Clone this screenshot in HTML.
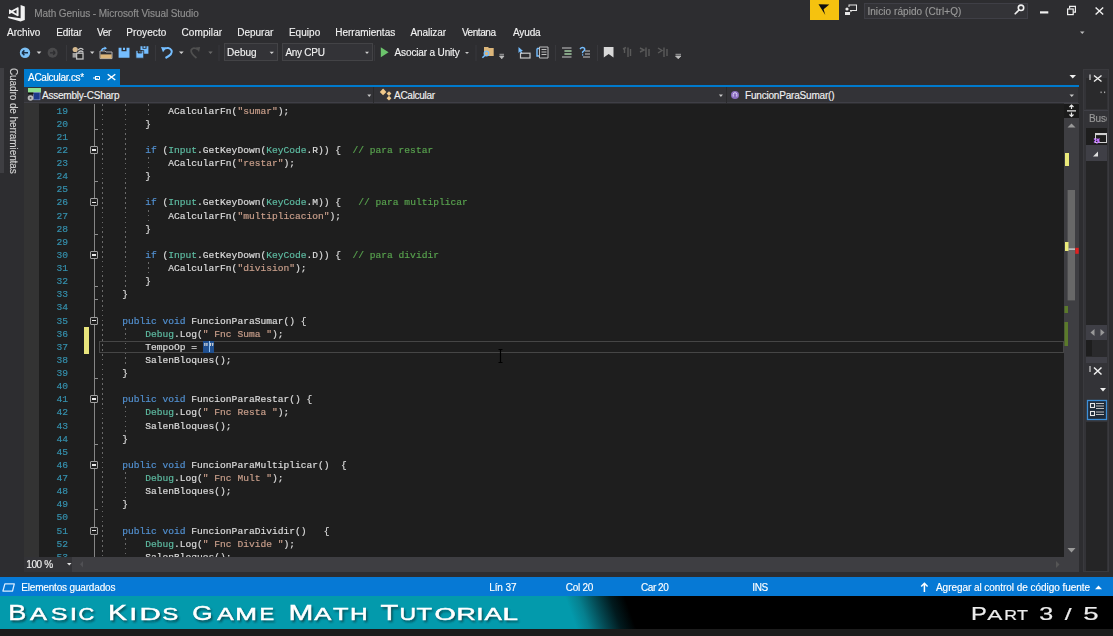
<!DOCTYPE html>
<html><head><meta charset="utf-8">
<style>
*{margin:0;padding:0;box-sizing:border-box}
html,body{width:1113px;height:636px;overflow:hidden;background:#2d2d30;font-family:"Liberation Sans",sans-serif;font-size:10px;color:#f1f1f1}
.a{position:absolute}
.t{position:absolute;white-space:pre;line-height:12px;-webkit-text-stroke:0.15px currentColor}
.w{color:#fff}
#code{position:absolute;left:39px;top:104px;width:1025px;height:453px;background:#1e1e1e;overflow:hidden}
.ln{position:absolute;left:0;width:29px;text-align:right;color:#3590ad}
.cl{position:absolute;left:60.2px;white-space:pre;color:#dcdcdc}
#code .ln,#code .cl{font-family:"Liberation Mono",monospace;font-size:9.6px;line-height:13.125px;height:13.125px;-webkit-text-stroke:0.18px currentColor}
.k{color:#5290d0}.ty{color:#5ebca2}.s{color:#c89e8a}.c{color:#58a24e}
.box{position:absolute;left:51px;width:8px;height:8px;border:1.2px solid #a0a0a0;border-radius:1px;background:#1e1e1e}
.box:after{content:"";position:absolute;left:1px;top:2.2px;width:4px;height:1.6px;background:#e8e8e8}
.g{position:absolute;width:1.2px;background:repeating-linear-gradient(180deg,#6a6a6a 0,#6a6a6a 1.6px,transparent 1.6px,transparent 4.9px)}
</style></head><body><div id="root" style="position:absolute;left:0;top:0;width:1113px;height:636px;filter:blur(0.4px)">
<!-- title bar -->
<div class="t" style="left:34.2px;top:8.4px;color:#8f8f8f;letter-spacing:-0.07px">Math Genius - Microsoft Visual Studio</div>
<div class="a" style="left:810px;top:0;width:29px;height:20px;background:#f5c20f"></div>
<div class="a" style="left:864px;top:3px;width:164px;height:16px;background:#333337;border:1px solid #3f3f46"></div>
<div class="t" style="left:867.4px;top:5.9px;color:#999999;letter-spacing:0.07px">Inicio rápido (Ctrl+Q)</div>
<!-- menu -->
<div class="t" style="left:7px;top:27.1px">Archivo</div>
<div class="t" style="left:56.2px;top:27.1px;letter-spacing:-0.03px">Editar</div>
<div class="t" style="left:97px;top:27.1px;letter-spacing:-0.4px">Ver</div>
<div class="t" style="left:126.2px;top:27.1px;letter-spacing:0.1px">Proyecto</div>
<div class="t" style="left:181.5px;top:27.1px;letter-spacing:0.09px">Compilar</div>
<div class="t" style="left:237.2px;top:27.1px">Depurar</div>
<div class="t" style="left:288.9px;top:27.1px;letter-spacing:0.05px">Equipo</div>
<div class="t" style="left:335.2px;top:27.1px">Herramientas</div>
<div class="t" style="left:410.5px;top:27.1px;letter-spacing:-0.09px">Analizar</div>
<div class="t" style="left:461.9px;top:27.1px;letter-spacing:-0.44px">Ventana</div>
<div class="t" style="left:513px;top:27.1px;letter-spacing:-0.14px">Ayuda</div>
<!-- toolbar combos -->
<div class="a" style="left:224px;top:43px;width:54px;height:18px;background:#333337;border:1px solid #434346"></div>
<div class="t" style="left:227.1px;top:47.3px">Debug</div>
<div class="a" style="left:282px;top:43px;width:91px;height:18px;background:#333337;border:1px solid #434346"></div>
<div class="t" style="left:285.4px;top:47.3px;letter-spacing:-0.27px">Any CPU</div>
<div class="t" style="left:394.6px;top:47.3px;letter-spacing:-0.15px">Asociar a Unity</div>
<!-- left strip -->
<div class="a" style="left:0;top:68px;width:4px;height:105px;background:#3e3e42"></div>
<div class="t" style="left:7px;top:68px;width:104px;transform-origin:0 0;transform:translate(12px,0) rotate(90deg);color:#d0d0d0;letter-spacing:-0.1px">Cuadro de herramientas</div>
<!-- tab -->
<div class="a" style="left:24px;top:69px;width:96px;height:17px;background:#007acc"></div>
<div class="t w" style="left:28px;top:72px;letter-spacing:-0.27px">ACalcular.cs*</div>
<div class="a" style="left:24px;top:85px;width:1055px;height:2px;background:#007acc"></div>
<!-- nav bar -->
<div class="a" style="left:24px;top:87px;width:1054px;height:16px;background:#333337;border-bottom:1px solid #3f3f46"></div>
<div class="a" style="left:373px;top:87px;width:1px;height:16px;background:#2a2a2c"></div>
<div class="a" style="left:726px;top:87px;width:1px;height:16px;background:#2a2a2c"></div>
<div class="t" style="left:42px;top:89.5px;letter-spacing:-0.22px">Assembly-CSharp</div>
<div class="t" style="left:394px;top:89.5px;letter-spacing:-0.27px">ACalcular</div>
<div class="t" style="left:745px;top:89.5px;letter-spacing:-0.19px">FuncionParaSumar()</div>
<!-- editor -->
<div class="a" style="left:24px;top:103px;width:15px;height:454px;background:#333333"></div>
<div id="code">
<div class="a" style="left:54.8px;top:0;width:1.4px;height:453px;background:#858585"></div>
<div class="box" style="top:41.88px"></div>
<div class="box" style="top:94.38px"></div>
<div class="box" style="top:146.88px"></div>
<div class="box" style="top:212.50px"></div>
<div class="box" style="top:291.25px"></div>
<div class="box" style="top:356.88px"></div>
<div class="box" style="top:422.50px"></div>
<div class="a" style="left:56px;top:24.62px;width:3px;height:1px;background:#8c8c8c"></div>
<div class="a" style="left:56px;top:77.12px;width:3px;height:1px;background:#8c8c8c"></div>
<div class="a" style="left:56px;top:129.62px;width:3px;height:1px;background:#8c8c8c"></div>
<div class="a" style="left:56px;top:182.12px;width:3px;height:1px;background:#8c8c8c"></div>
<div class="a" style="left:56px;top:195.25px;width:3px;height:1px;background:#8c8c8c"></div>
<div class="a" style="left:56px;top:274.00px;width:3px;height:1px;background:#8c8c8c"></div>
<div class="a" style="left:56px;top:339.62px;width:3px;height:1px;background:#8c8c8c"></div>
<div class="a" style="left:56px;top:405.25px;width:3px;height:1px;background:#8c8c8c"></div>
<div class="g" style="left:62.80px;top:0.00px;height:459.88px"></div>
<div class="g" style="left:85.84px;top:0.00px;height:184.25px"></div>
<div class="g" style="left:108.88px;top:0.00px;height:13.62px"></div>
<div class="g" style="left:108.88px;top:53.00px;height:13.12px"></div>
<div class="g" style="left:108.88px;top:105.50px;height:13.12px"></div>
<div class="g" style="left:108.88px;top:158.00px;height:13.12px"></div>
<div class="g" style="left:85.84px;top:223.62px;height:39.38px"></div>
<div class="g" style="left:85.84px;top:302.38px;height:26.25px"></div>
<div class="g" style="left:85.84px;top:368.00px;height:26.25px"></div>
<div class="g" style="left:85.84px;top:433.62px;height:26.25px"></div>
<div class="a" style="left:59.7px;top:237px;width:965px;height:12px;border:1px solid #464646"></div>
<div class="a" style="left:163.6px;top:236.5px;width:11px;height:12.5px;background:#1f4f8f"></div>
<div class="cl" style="top:236.750px;left:163.88px;color:#dcdcdc">""</div>
<div class="a" style="left:169.5px;top:237px;width:1.2px;height:11px;background:#8fc0f0"></div>
<div class="a" style="left:45px;top:223px;width:5px;height:26.5px;background:#e8e47c"></div>
<div class="ln" style="top:0.5px">19</div>
<div class="cl" style="top:0.5px">            ACalcularFn(<span class="s">"sumar"</span>);</div>
<div class="ln" style="top:13.625px">20</div>
<div class="cl" style="top:13.625px">        }</div>
<div class="ln" style="top:26.75px">21</div>
<div class="ln" style="top:39.875px">22</div>
<div class="cl" style="top:39.875px">        <span class="k">if</span> (<span class="ty">Input</span>.GetKeyDown(<span class="ty">KeyCode</span>.R)) {  <span class="c">// para restar</span></div>
<div class="ln" style="top:53.0px">23</div>
<div class="cl" style="top:53.0px">            ACalcularFn(<span class="s">"restar"</span>);</div>
<div class="ln" style="top:66.125px">24</div>
<div class="cl" style="top:66.125px">        }</div>
<div class="ln" style="top:79.25px">25</div>
<div class="ln" style="top:92.375px">26</div>
<div class="cl" style="top:92.375px">        <span class="k">if</span> (<span class="ty">Input</span>.GetKeyDown(<span class="ty">KeyCode</span>.M)) {   <span class="c">// para multiplicar</span></div>
<div class="ln" style="top:105.5px">27</div>
<div class="cl" style="top:105.5px">            ACalcularFn(<span class="s">"multiplicacion"</span>);</div>
<div class="ln" style="top:118.625px">28</div>
<div class="cl" style="top:118.625px">        }</div>
<div class="ln" style="top:131.75px">29</div>
<div class="ln" style="top:144.875px">30</div>
<div class="cl" style="top:144.875px">        <span class="k">if</span> (<span class="ty">Input</span>.GetKeyDown(<span class="ty">KeyCode</span>.D)) {  <span class="c">// para dividir</span></div>
<div class="ln" style="top:158.0px">31</div>
<div class="cl" style="top:158.0px">            ACalcularFn(<span class="s">"division"</span>);</div>
<div class="ln" style="top:171.125px">32</div>
<div class="cl" style="top:171.125px">        }</div>
<div class="ln" style="top:184.25px">33</div>
<div class="cl" style="top:184.25px">    }</div>
<div class="ln" style="top:197.375px">34</div>
<div class="ln" style="top:210.5px">35</div>
<div class="cl" style="top:210.5px">    <span class="k">public</span> <span class="k">void</span> FuncionParaSumar() {</div>
<div class="ln" style="top:223.625px">36</div>
<div class="cl" style="top:223.625px">        <span class="ty">Debug</span>.Log(<span class="s">" Fnc Suma "</span>);</div>
<div class="ln" style="top:236.75px">37</div>
<div class="cl" style="top:236.75px">        TempoOp = </div>
<div class="ln" style="top:249.875px">38</div>
<div class="cl" style="top:249.875px">        SalenBloques();</div>
<div class="ln" style="top:263.0px">39</div>
<div class="cl" style="top:263.0px">    }</div>
<div class="ln" style="top:276.125px">40</div>
<div class="ln" style="top:289.25px">41</div>
<div class="cl" style="top:289.25px">    <span class="k">public</span> <span class="k">void</span> FuncionParaRestar() {</div>
<div class="ln" style="top:302.375px">42</div>
<div class="cl" style="top:302.375px">        <span class="ty">Debug</span>.Log(<span class="s">" Fnc Resta "</span>);</div>
<div class="ln" style="top:315.5px">43</div>
<div class="cl" style="top:315.5px">        SalenBloques();</div>
<div class="ln" style="top:328.625px">44</div>
<div class="cl" style="top:328.625px">    }</div>
<div class="ln" style="top:341.75px">45</div>
<div class="ln" style="top:354.875px">46</div>
<div class="cl" style="top:354.875px">    <span class="k">public</span> <span class="k">void</span> FuncionParaMultiplicar()  {</div>
<div class="ln" style="top:368.0px">47</div>
<div class="cl" style="top:368.0px">        <span class="ty">Debug</span>.Log(<span class="s">" Fnc Mult "</span>);</div>
<div class="ln" style="top:381.125px">48</div>
<div class="cl" style="top:381.125px">        SalenBloques();</div>
<div class="ln" style="top:394.25px">49</div>
<div class="cl" style="top:394.25px">    }</div>
<div class="ln" style="top:407.375px">50</div>
<div class="ln" style="top:420.5px">51</div>
<div class="cl" style="top:420.5px">    <span class="k">public</span> <span class="k">void</span> FuncionParaDividir()   {</div>
<div class="ln" style="top:433.625px">52</div>
<div class="cl" style="top:433.625px">        <span class="ty">Debug</span>.Log(<span class="s">" Fnc Divide "</span>);</div>
<div class="ln" style="top:446.75px">53</div>
<div class="cl" style="top:446.75px">        SalenBloques();</div>
</div>
<div class="a" style="left:1064px;top:103px;width:15px;height:468px;background:#3e3e42"></div>
<div class="a" style="left:24px;top:557px;width:48px;height:15px;background:#333337"></div>
<div class="a" style="left:72px;top:557px;width:1007px;height:15px;background:#3e3e42"></div>
<div class="t" style="left:26.2px;top:559px;letter-spacing:-0.35px">100 %</div>
<!-- right panel -->
<div class="a" style="left:1083px;top:69px;width:26px;height:503px;background:#333337;border:1px solid #3a3a3e"></div>
<div class="a" style="left:1085.5px;top:78px;width:21px;height:31px;background:#2a2a2c"></div>
<div class="a" style="left:1084px;top:110px;width:24px;height:1px;background:#3f3f46"></div>
<div class="t" style="left:1089px;top:113px;color:#999;letter-spacing:-0.1px;width:18px;overflow:hidden">Busc</div>
<div class="a" style="left:1085.5px;top:128px;width:21px;height:17px;background:#1e1e1e"></div>
<div class="a" style="left:1085.5px;top:145px;width:21px;height:16px;background:#3f3f46"></div>
<div class="a" style="left:1085.5px;top:161px;width:21px;height:164px;background:#252526"></div>
<div class="a" style="left:1085.5px;top:325px;width:21px;height:15px;background:#3f3f46"></div>
<div class="a" style="left:1085.5px;top:340px;width:21px;height:17px;background:#2a2a2c"></div>
<div class="a" style="left:1085.5px;top:340px;width:6px;height:16px;background:#1e1e1e"></div>
<div class="a" style="left:1085.5px;top:357px;width:21px;height:6px;background:#3f3f46"></div>
<div class="a" style="left:1085.5px;top:422px;width:21px;height:149px;background:#252526"></div>
<!-- status -->
<div class="a" style="left:0;top:577px;width:1113px;height:19px;background:#0679d5"></div>
<div class="t w" style="left:21.2px;top:582px;letter-spacing:-0.17px">Elementos guardados</div>
<div class="t w" style="left:489.2px;top:582px;letter-spacing:-0.1px">Lín 37</div>
<div class="t w" style="left:565.8px;top:582px;letter-spacing:-0.27px">Col 20</div>
<div class="t w" style="left:641.1px;top:582px;letter-spacing:-0.47px">Car 20</div>
<div class="t w" style="left:752.3px;top:582px;letter-spacing:-0.45px">INS</div>
<div class="t w" style="left:936px;top:582px;letter-spacing:-0.05px">Agregar al control de código fuente</div>
<!-- banner -->
<div class="a" style="left:0;top:596px;width:1113px;height:33px;background:linear-gradient(70deg,#039aac 0,#039aac 542px,#06808f 554px,#044b55 569px,#011a1e 584px,#000 598px,#000 100%)"></div>
<div class="a" style="left:0;top:629px;width:1113px;height:7px;background:#1c1c1c"></div>
<svg class="a" style="left:0;top:0" width="1113" height="636" viewBox="0 0 1113 636">
<g font-family="Liberation Sans" fill="#0d2e33" opacity="0.85" transform="translate(1.5,2)" filter="url(#bl)">
<text transform="translate(8.23,620.3) scale(1.276,1)" font-size="21.22">B</text>
<text transform="translate(29.90,620.3) scale(1.538,1)" font-size="16.57">A</text>
<text transform="translate(50.80,620.3) scale(1.524,1)" font-size="16.43">S</text>
<text transform="translate(69.86,620.3) scale(1.600,1)" font-size="16.57">I</text>
<text transform="translate(78.44,620.3) scale(1.327,1)" font-size="16.43">C</text>
<text transform="translate(108.02,620.3) scale(1.341,1)" font-size="21.22">K</text>
<text transform="translate(129.61,620.3) scale(1.600,1)" font-size="16.57">I</text>
<text transform="translate(139.43,620.3) scale(1.784,1)" font-size="16.57">D</text>
<text transform="translate(162.15,620.3) scale(1.461,1)" font-size="16.43">S</text>
<text transform="translate(192.24,620.3) scale(1.244,1)" font-size="21.04">G</text>
<text transform="translate(217.30,620.3) scale(1.484,1)" font-size="16.57">A</text>
<text transform="translate(235.31,620.3) scale(1.579,1)" font-size="16.57">M</text>
<text transform="translate(259.55,620.3) scale(1.325,1)" font-size="16.57">E</text>
<text transform="translate(288.50,620.3) scale(1.409,1)" font-size="21.22">M</text>
<text transform="translate(314.30,620.3) scale(1.547,1)" font-size="16.57">A</text>
<text transform="translate(333.09,620.3) scale(1.535,1)" font-size="16.57">T</text>
<text transform="translate(349.94,620.3) scale(1.479,1)" font-size="16.57">H</text>
<text transform="translate(380.51,620.3) scale(1.374,1)" font-size="21.22">T</text>
<text transform="translate(399.49,620.3) scale(1.401,1)" font-size="16.33">U</text>
<text transform="translate(416.49,620.3) scale(1.535,1)" font-size="16.57">T</text>
<text transform="translate(434.46,620.3) scale(1.666,1)" font-size="16.43">O</text>
<text transform="translate(456.55,620.3) scale(1.618,1)" font-size="16.57">R</text>
<text transform="translate(476.26,620.3) scale(1.600,1)" font-size="16.57">I</text>
<text transform="translate(484.60,620.3) scale(1.575,1)" font-size="16.57">A</text>
<text transform="translate(502.46,620.3) scale(1.683,1)" font-size="16.57">L</text>
</g>
<filter id="bl"><feGaussianBlur stdDeviation="0.9"/></filter>
<g font-family="Liberation Sans" fill="#ffffff" stroke="#ffffff" stroke-width="0.45">
<text transform="translate(8.23,620.3) scale(1.276,1)" font-size="21.22">B</text>
<text transform="translate(29.90,620.3) scale(1.538,1)" font-size="16.57">A</text>
<text transform="translate(50.80,620.3) scale(1.524,1)" font-size="16.43">S</text>
<text transform="translate(69.86,620.3) scale(1.600,1)" font-size="16.57">I</text>
<text transform="translate(78.44,620.3) scale(1.327,1)" font-size="16.43">C</text>
<text transform="translate(108.02,620.3) scale(1.341,1)" font-size="21.22">K</text>
<text transform="translate(129.61,620.3) scale(1.600,1)" font-size="16.57">I</text>
<text transform="translate(139.43,620.3) scale(1.784,1)" font-size="16.57">D</text>
<text transform="translate(162.15,620.3) scale(1.461,1)" font-size="16.43">S</text>
<text transform="translate(192.24,620.3) scale(1.244,1)" font-size="21.04">G</text>
<text transform="translate(217.30,620.3) scale(1.484,1)" font-size="16.57">A</text>
<text transform="translate(235.31,620.3) scale(1.579,1)" font-size="16.57">M</text>
<text transform="translate(259.55,620.3) scale(1.325,1)" font-size="16.57">E</text>
<text transform="translate(288.50,620.3) scale(1.409,1)" font-size="21.22">M</text>
<text transform="translate(314.30,620.3) scale(1.547,1)" font-size="16.57">A</text>
<text transform="translate(333.09,620.3) scale(1.535,1)" font-size="16.57">T</text>
<text transform="translate(349.94,620.3) scale(1.479,1)" font-size="16.57">H</text>
<text transform="translate(380.51,620.3) scale(1.374,1)" font-size="21.22">T</text>
<text transform="translate(399.49,620.3) scale(1.401,1)" font-size="16.33">U</text>
<text transform="translate(416.49,620.3) scale(1.535,1)" font-size="16.57">T</text>
<text transform="translate(434.46,620.3) scale(1.666,1)" font-size="16.43">O</text>
<text transform="translate(456.55,620.3) scale(1.618,1)" font-size="16.57">R</text>
<text transform="translate(476.26,620.3) scale(1.600,1)" font-size="16.57">I</text>
<text transform="translate(484.60,620.3) scale(1.575,1)" font-size="16.57">A</text>
<text transform="translate(502.46,620.3) scale(1.683,1)" font-size="16.57">L</text>
</g>
<g font-family="Liberation Sans" fill="#ececec" stroke="#ececec" stroke-width="0.2">
<text transform="translate(970.91,619.7) scale(1.347,1)" font-size="17.59">P</text>
<text transform="translate(987.30,619.7) scale(1.605,1)" font-size="14.10">A</text>
<text transform="translate(1004.20,619.7) scale(1.256,1)" font-size="14.10">R</text>
<text transform="translate(1016.95,619.7) scale(1.278,1)" font-size="14.10">T</text>
<text transform="translate(1039.20,619.7) scale(1.440,1)" font-size="17.44">3</text>
<text transform="translate(1064.75,619.7) scale(1.476,1)" font-size="16.58">/</text>
<text transform="translate(1083.14,619.7) scale(1.562,1)" font-size="17.69">5</text>
</g>
</svg>
<svg class="a" style="left:0;top:0" width="1113" height="636" viewBox="0 0 1113 636">
<!-- VS logo -->
<g fill="#f2f2f2">
<path d="M20.6 5.1 L24.8 6.6 L24.8 19.9 L20.6 21.4 L8.2 17.9 L8.2 16.4 L20.6 18.3 Z"/>
<path d="M9 9.2 L11.6 10.6 L17.6 7.2 L18.6 7.6 L18.6 15.8 L17.6 16.2 L11.6 12.9 L9 14.2 Z M13.2 11.75 L16.5 9.7 L16.5 13.8 Z" fill-rule="evenodd"/>
</g>
<!-- notification flag -->
<path d="M818.5 4.3 L829.3 4.6 L823.6 9.3 L825.3 15.1 Z" fill="#111"/>
<!-- feedback -->
<g fill="#e8e8e8">
<circle cx="847" cy="9" r="1.6"/>
<rect x="845" y="12" width="5" height="3"/>
<path d="M848.5 4.5 H857 V11 H852 L850.5 12.5 V11 H850 V10 H856 V5.5 H849.5 V7 H848.5 Z"/>
</g>
<!-- search icon -->
<g stroke="#f0f0f0" fill="none" stroke-width="1.6">
<circle cx="1021" cy="7.8" r="2.7"/>
<path d="M1019 10 L1015.2 13.8" stroke-linecap="round"/>
</g>
<!-- window buttons -->
<rect x="1040" y="11.3" width="8.3" height="2.2" fill="#f0f0f0"/>
<g fill="none" stroke="#f0f0f0" stroke-width="1.2">
<path d="M1069.6 8.5 V6.4 H1075.4 V12.2 H1073.4"/>
<rect x="1067.6" y="9" width="5.6" height="5.6"/>
</g>
<path d="M1095.6 7.4 L1103.2 14.6 M1103.2 7.4 L1095.6 14.6" stroke="#f0f0f0" stroke-width="1.4"/>

<!-- toolbar -->
<circle cx="25" cy="52.8" r="5.2" fill="#7cc0f5"/>
<path d="M22 52.8 H28 M22 52.8 L24.4 50.4 M22 52.8 L24.4 55.2" stroke="#1b2f45" stroke-width="1.5" fill="none"/>
<path d="M36.6 51.4 H41.4 L39 54 Z" fill="#d0d0d0"/>
<circle cx="52.6" cy="52.8" r="5" fill="#4a4a4c"/>
<path d="M50 52.8 H55.2 M55.2 52.8 L53.2 50.8 M55.2 52.8 L53.2 54.8" stroke="#2d2d30" stroke-width="1.3" fill="none"/>
<rect x="66" y="45" width="1" height="16" fill="#38383c"/>
<!-- new project -->
<circle cx="75.2" cy="49.5" r="2.6" fill="#d5b98f"/>
<path d="M78.2 50 Q81 46.8 83.3 49.8 M78.2 52.6 Q81 49.4 83.3 52.4" stroke="#c8c8c8" stroke-width="1.4" fill="none"/>
<rect x="72.6" y="53" width="3.6" height="4.6" fill="#a0a0a0"/>
<rect x="76.6" y="53.2" width="6.4" height="5.8" fill="#2a2a2a" stroke="#c0c0c0" stroke-width="1.3"/>
<path d="M90 51.6 H94.4 L92.2 54 Z" fill="#d0d0d0"/>
<!-- open folder -->
<path d="M100 51 H105 L106 52 H112 V58.6 H100 Z" fill="none" stroke="#b0b0b0" stroke-width="1"/>
<rect x="100.4" y="54.4" width="11.3" height="4" fill="#dcb67a"/>
<path d="M101.5 51 Q102 48 105.5 48.2" stroke="#75beff" stroke-width="1.5" fill="none"/>
<path d="M104.5 46.5 L107 48.2 L104.5 50 Z" fill="#75beff"/>
<!-- save -->
<path d="M118.6 47.7 H129.5 V57.8 H118.6 Z M121.5 47.7 V51.3 H126.5 V47.7 H125 V50 H123 V47.7 Z" fill="#75beff" fill-rule="evenodd"/>
<!-- save all -->
<path d="M140.5 46.2 H148.4 V53.8 H140.5 Z M142.5 46.2 V48.8 H146.5 V46.2 H145.5 V48 H143.5 V46.2 Z" fill="#75beff" fill-rule="evenodd"/>
<path d="M135.9 50.5 H143.7 V58.2 H135.9 Z M138 50.5 V53 H141.8 V50.5 H140.8 V52.2 H139 V50.5 Z" fill="#75beff" fill-rule="evenodd" stroke="#2d2d30" stroke-width="0.8"/>
<rect x="155" y="45" width="1" height="16" fill="#38383c"/>
<!-- undo -->
<path d="M163 49.5 Q169 46 171.6 50.5 Q173 54 165.5 58" stroke="#75beff" stroke-width="2" fill="none"/>
<path d="M161 47 L166.5 47.5 L163 52.2 Z" fill="#75beff"/>
<path d="M179 51.6 H183.7 L181.35 54 Z" fill="#d0d0d0"/>
<!-- redo -->
<path d="M198 49.5 Q193 46.5 191.2 50 Q190.5 53.5 196.5 58" stroke="#505050" stroke-width="1.8" fill="none"/>
<path d="M200.2 47 L195.5 47.5 L199 52 Z" fill="#505050"/>
<path d="M208.3 51.6 H212.7 L210.5 54 Z" fill="#6a6a6a"/>
<rect x="218.5" y="45" width="1" height="16" fill="#38383c"/>
<path d="M269.6 51.8 H273.9 L271.75 54 Z" fill="#d0d0d0"/>
<path d="M365 51.8 H369 L367 54 Z" fill="#d0d0d0"/>
<rect x="374" y="45" width="1" height="16" fill="#38383c"/>
<!-- play -->
<path d="M380.8 47.3 L388.6 52.3 L380.8 57.3 Z" fill="#6cc46c"/>
<path d="M465 52 H469 L467 54 Z" fill="#c8c8c8"/>
<rect x="475.5" y="45" width="1" height="16" fill="#38383c"/>
<!-- find in files -->
<path d="M484 47 H488 L489 48 H493.7 V56 H484 Z" fill="#dcb67a"/>
<circle cx="486.5" cy="53.5" r="2.3" fill="none" stroke="#75beff" stroke-width="1.3"/>
<path d="M485 55.2 L482.4 57.8" stroke="#75beff" stroke-width="1.6"/>
<path d="M499.5 54.3 H504 M499.5 56 H504 L501.75 58.8 Z" stroke="#bdbdbd" stroke-width="0.8" fill="#bdbdbd"/>
<!-- icon group 2 -->
<path d="M518.5 47 V53 L520 51.6 L521.5 54 L522.5 53.4 L521.3 51 H523 Z" fill="#75beff"/>
<rect x="520.5" y="53.2" width="9.5" height="4.8" fill="none" stroke="#c8c8c8" stroke-width="1.2"/>
<path d="M537 48.5 H539.5 M537 48.5 V56 H539" stroke="#75beff" stroke-width="1.4" fill="none"/>
<path d="M539.5 47 H548 V58 H539.5 Z" fill="none" stroke="#bdbdbd" stroke-width="1"/>
<path d="M541.5 49.5 H546.5 M541.5 52 H546.5 M541.5 54.5 H546.5" stroke="#bdbdbd" stroke-width="1"/>
<rect x="555" y="45" width="1" height="16" fill="#38383c"/>
<path d="M562 48 H571.5 M564.5 51 H571.5 M564.5 54 H571.5 M562 57 H571.5" stroke="#c8c8c8" stroke-width="1.2"/>
<path d="M564.5 51 H571.5 M564.5 54 H571.5" stroke="#8fd08f" stroke-width="1.2"/>
<path d="M580 49 Q582 46.5 584.5 48.3 Q585.5 50.3 582.6 52 V53.2" stroke="#75beff" stroke-width="1.4" fill="none"/>
<rect x="582" y="54.3" width="1.3" height="1.3" fill="#75beff"/>
<path d="M585 51 H590 M585 54 H590 M583 57 H590" stroke="#c8c8c8" stroke-width="1.2"/>
<rect x="597" y="45" width="1" height="16" fill="#38383c"/>
<path d="M603.8 46.9 H613.5 V57.4 L608.65 54 L603.8 57.4 Z" fill="#d8d8d8"/>
<g stroke="#5a5a5a" stroke-width="1.4" fill="none">
<path d="M623 49 L626 47.5 M624.5 48 V53 M628 47.5 V57 M630.5 49 V56"/>
<path d="M640 48 L644 50 L640 52 M646 47.5 V57 M649 49 V56"/>
<path d="M658 48 L662 50.5 L658 53 M664 47.5 V57 M667 49 V56"/>
</g>
<path d="M675.5 54.3 H681 M675.5 56 H681 L678.25 58.8 Z" stroke="#bdbdbd" stroke-width="0.8" fill="#bdbdbd"/>

<!-- tab icons -->
<path d="M93 78 H95.5 M95.5 76 V80 M95.5 76.5 H99.5 V79.5 H95.5 M97 79.5 V78" stroke="#fff" stroke-width="1" fill="none"/>
<path d="M107.7 74.2 L115.3 80 M115.3 74.2 L107.7 80" stroke="#fff" stroke-width="1.4"/>
<!-- tab list arrow -->
<path d="M1069.5 75 H1076 L1072.75 78.5 Z" fill="#f0f0f0"/>

<!-- nav bar icons -->
<path d="M28 88 H41 V92.6 H28 Z" fill="#8fe08f"/>
<rect x="33.7" y="92.6" width="6.3" height="7.2" fill="#1d3a8a" stroke="#8a9ad0" stroke-width="0.6"/>
<rect x="28" y="92.6" width="5.5" height="1.5" fill="#111"/>
<circle cx="30.5" cy="98" r="2.8" fill="#bdbdbd"/>
<circle cx="30.5" cy="98" r="1" fill="#555"/>
<path d="M367.3 94.4 H371.2 L369.25 97 Z" fill="#c8c8c8"/>
<path d="M383.1 88.6 L386.4 91.9 L383.1 95.2 L379.8 91.9 Z" fill="#f0c88a"/>
<path d="M389 91.2 L391.4 93.6 L389 96 L386.6 93.6 Z" fill="#f0c88a"/>
<path d="M389 95.8 L391.4 98.2 L389 100.6 L386.6 98.2 Z" fill="#f0c88a"/>
<path d="M718.9 94.4 H722.9 L720.9 97 Z" fill="#c8c8c8"/>
<circle cx="735" cy="95" r="4" fill="#8c6fc0"/>
<path d="M733.2 96.6 V94.5 A1.8 1.8 0 0 1 736.8 94.5 V96.6" stroke="#e8e0ff" stroke-width="0.9" fill="none"/>
<path d="M1069.5 94.4 H1074 L1071.75 97 Z" fill="#c8c8c8"/>

<!-- editor split & scroll arrows -->
<rect x="1064" y="104" width="15" height="14" fill="#1a1a1a"/>
<path d="M1067 110.8 H1076 M1071.5 105.5 V109 M1071.5 112.5 V116 M1069.5 107 L1071.5 105 L1073.5 107 M1069.5 114.5 L1071.5 116.5 L1073.5 114.5" stroke="#e8e8e8" stroke-width="1.2" fill="none"/>
<path d="M1067.5 127.5 L1071.5 123.5 L1075.5 127.5 Z" fill="#999"/>
<rect x="1067.6" y="190" width="7.4" height="110.4" fill="#686868"/>
<path d="M1067.5 548 L1071.5 552.5 L1075.5 548 Z" fill="#999"/>
<path d="M1056 561 L1059.5 564.5 L1056 568 Z" fill="#555"/>
<!-- scroll markers -->
<rect x="1065" y="153" width="4" height="13" fill="#eaea7a"/>
<rect x="1065" y="242" width="3.5" height="9" fill="#eaea7a"/>
<rect x="1068.5" y="248.5" width="6.5" height="1.2" fill="#e0e0e0"/>
<rect x="1075.3" y="247.8" width="3.4" height="6" fill="#e02020"/>
<rect x="1064.5" y="306" width="3.5" height="7" fill="#5b7a2b"/>
<rect x="1064.5" y="322" width="3.5" height="24" fill="#5b7a2b"/>

<!-- right panel icons -->
<path d="M1090 74.5 V80" stroke="#f0f0f0" stroke-width="1"/>
<path d="M1094 75.5 L1101.5 81.5 M1101.5 75.5 L1094 81.5" stroke="#f0f0f0" stroke-width="1.4"/>
<rect x="1100.5" y="91.5" width="1.2" height="1.6" fill="#aaa"/><rect x="1104" y="91.5" width="1.2" height="1.6" fill="#aaa"/>
<rect x="1095.5" y="133.5" width="11" height="9" fill="none" stroke="#d0d0d0" stroke-width="1"/>
<rect x="1095.5" y="133.5" width="11" height="1.6" fill="#d0d0d0"/>
<path d="M1094 138.5 L1096 140.5 L1094 142.5 M1096.5 138.5 L1099 141 L1096.5 143.5 M1099.5 138.5 L1097.5 140.5 L1099.5 142.5" stroke="#c070ff" stroke-width="1.2" fill="none"/>
<path d="M1093 156.5 L1098 151.5 V156.5 Z" fill="#e0e0e0"/>
<path d="M1094.5 329 L1090.5 332.5 L1094.5 336 Z" fill="#999"/><path d="M1100.5 329 L1104.5 332.5 L1100.5 336 Z" fill="#999"/>
<path d="M1090 366 V372" stroke="#f0f0f0" stroke-width="1"/>
<path d="M1094 367.5 L1101.5 374.5 M1101.5 367.5 L1094 374.5" stroke="#f0f0f0" stroke-width="1.5"/>
<path d="M1100 388 H1106 L1103 391.5 Z" fill="#f0f0f0"/>
<rect x="1087.5" y="400.5" width="19" height="19" fill="#1e2a38" stroke="#3d8fd8" stroke-width="1.3"/>
<rect x="1090.5" y="403.5" width="4" height="4" fill="none" stroke="#e8e8e8" stroke-width="1.1"/>
<rect x="1090.5" y="411.5" width="4" height="4" fill="none" stroke="#e8e8e8" stroke-width="1.1"/>
<path d="M1096 403.5 H1104 M1096 406 H1104 M1096 408.5 H1104 M1096 412 H1104 M1096 414.5 H1104" stroke="#bdbdbd" stroke-width="1"/>
<path d="M1080 31.5 H1084.5 L1082.25 34 Z" fill="#bdbdbd"/>
<!-- status icons -->
<path d="M4.9 583.9 H14.3 L12.5 591.1 H2.9 Z" fill="none" stroke="#d8ecff" stroke-width="1.3" stroke-linejoin="round"/>
<path d="M67 563 H71.5 L69.25 565.6 Z" fill="#e0e0e0"/>
<path d="M83 561 L80 564.3 L83 567.6 Z" fill="#505054"/>
<path d="M924.4 592 V583.5 M921.2 586.6 L924.4 583.3 L927.6 586.6" stroke="#fff" stroke-width="1.5" fill="none"/>
<path d="M1095 589.3 L1098.5 585.6 L1102 589.3 Z" fill="#fff"/>
<!-- mouse I-beam -->
<path d="M500.5 350 V362 M498.5 349.5 H502.5 M498.5 362.5 H502.5" stroke="#000" stroke-width="1.2"/>
</svg>

</div></body></html>
